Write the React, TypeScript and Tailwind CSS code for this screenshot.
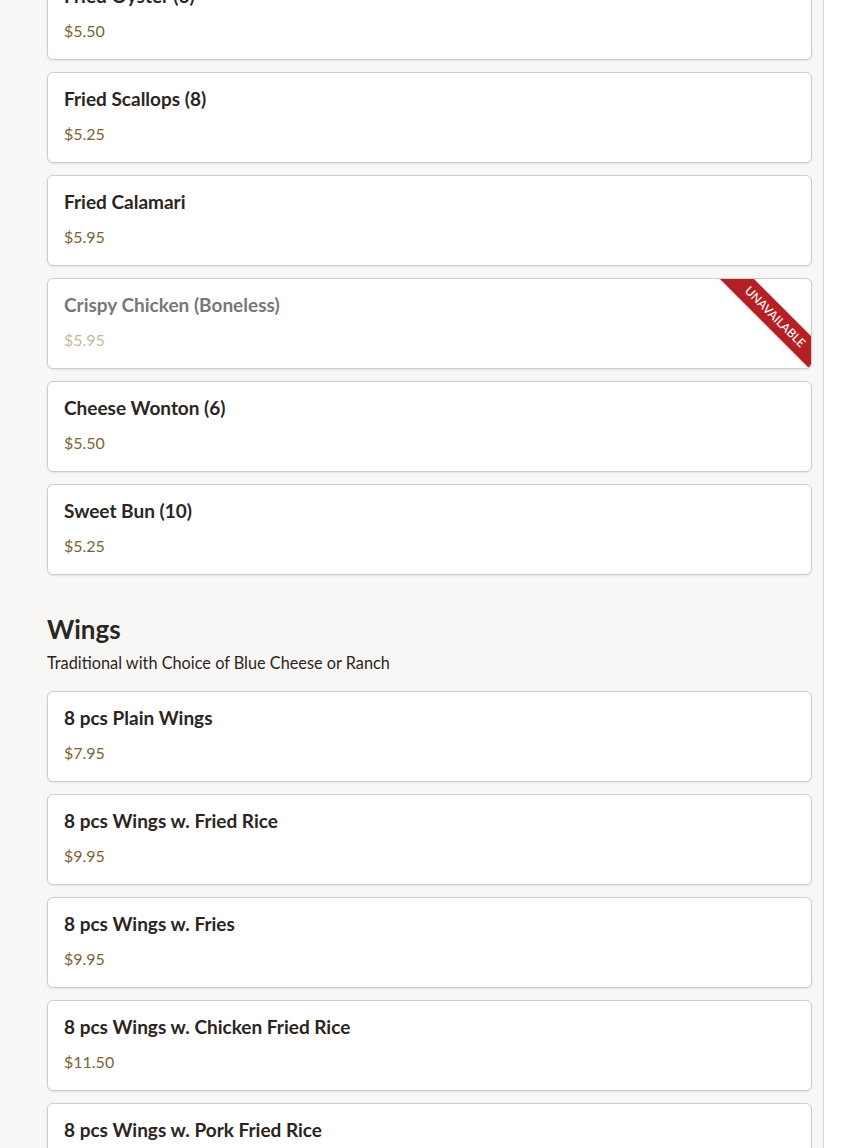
type Item = { name: string; price: string; unavailable?: boolean }

const appetizers: Item[] = [
  { name: "Fried Oyster (6)", price: "$5.50" },
  { name: "Fried Scallops (8)", price: "$5.25" },
  { name: "Fried Calamari", price: "$5.95" },
  { name: "Crispy Chicken (Boneless)", price: "$5.95", unavailable: true },
  { name: "Cheese Wonton (6)", price: "$5.50" },
  { name: "Sweet Bun (10)", price: "$5.25" },
]

const wings: Item[] = [
  { name: "8 pcs Plain Wings", price: "$7.95" },
  { name: "8 pcs Wings w. Fried Rice", price: "$9.95" },
  { name: "8 pcs Wings w. Fries", price: "$9.95" },
  { name: "8 pcs Wings w. Chicken Fried Rice", price: "$11.50" },
  { name: "8 pcs Wings w. Pork Fried Rice", price: "$11.50" },
]

function MenuCard({ item }: { item: Item }) {
  return (
    <div className="relative overflow-hidden rounded-md border border-[#cfccc9] bg-white px-4 pt-[15px] pb-4 shadow-[0_1px_2px_rgba(0,0,0,0.08)]">
      <h3
        className={
          item.unavailable
            ? "text-[19px] leading-[22px] font-bold text-[#7a7776]"
            : "text-[19px] leading-[22px] font-bold text-[#2b2522]"
        }
      >
        {item.name}
      </h3>
      <p
        className={
          item.unavailable
            ? "mt-[12px] text-[16px] leading-[24px] text-[#c4b89d]"
            : "mt-[12px] text-[16px] leading-[24px] text-[#7a6535]"
        }
      >
        {item.price}
      </p>
      {item.unavailable && (
        <div className="absolute top-[26px] right-[-44px] w-[160px] rotate-45 bg-[#b52025] text-center text-[12px] leading-[24px] font-medium text-white shadow-sm">
          UNAVAILABLE
        </div>
      )}
    </div>
  )
}

export default function App() {
  return (
    <div className="min-h-[1148px] bg-white font-['Lato','Noto_Sans',sans-serif]">
      <div className="h-[1148px] w-[824px] overflow-hidden border-r border-[#d9d6d3] bg-[#f9f7f5] pl-[47px] pr-[11px]">
        <div className="-mt-[31px] space-y-3">
          {appetizers.map((item) => (
            <MenuCard key={item.name} item={item} />
          ))}
        </div>

        <h2 className="mt-[38px] text-[26px] leading-[32px] font-bold text-[#2b2522]">Wings</h2>
        <p className="mt-[7px] text-[16.3px] leading-[22px] text-[#2b2522]">
          Traditional with Choice of Blue Cheese or Ranch
        </p>

        <div className="mt-[17px] space-y-3">
          {wings.map((item) => (
            <MenuCard key={item.name} item={item} />
          ))}
        </div>
      </div>
    </div>
  )
}
